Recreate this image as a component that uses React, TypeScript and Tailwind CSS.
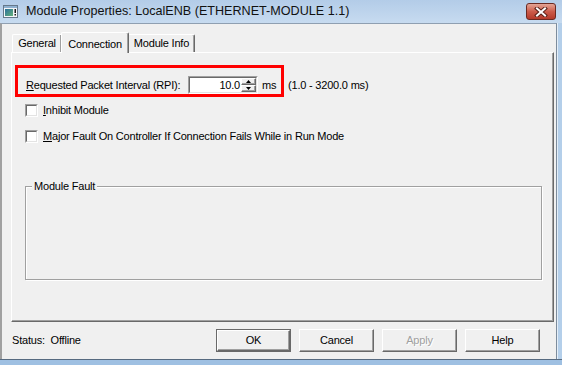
import React from "react"

const raised =
  "border border-t-white border-l-white border-r-[#696969] border-b-[#696969] shadow-[inset_-1px_-1px_0_#a0a0a0]"

function WinIcon() {
  return (
    <svg width="16" height="14" viewBox="0 0 16 14" className="ml-[3px] mt-[1px] shrink-0">
      <defs>
        <linearGradient id="ig" x1="0" y1="0" x2="1" y2="1">
          <stop offset="0" stopColor="#2b6f9b" />
          <stop offset="1" stopColor="#63b27a" />
        </linearGradient>
      </defs>
      <rect x="0.5" y="0.5" width="14" height="12" fill="#f4f6f8" stroke="#66788a" />
      <rect x="1" y="1" width="13" height="2" fill="#8fb0cf" />
      <rect x="2" y="4" width="8" height="7" fill="url(#ig)" />
      <rect x="11.5" y="4" width="1.5" height="4" fill="#1b1b1b" />
      <rect x="11.5" y="9" width="1.5" height="1.5" fill="#1b1b1b" />
    </svg>
  )
}

function CloseBtn() {
  return (
    <div className="ml-auto mr-[6px] self-start mt-[3px] w-[30px] h-[17px] rounded-[3px] border border-[#6b2a22] bg-linear-to-b from-[#e3a496] via-[#cc5c4b] to-[#b53a2a] flex items-center justify-center">
      <svg width="14" height="10" viewBox="0 0 14 10">
        <path d="M3 1.5 L11 8.5 M11 1.5 L3 8.5" stroke="#5a2018" strokeWidth="4" strokeLinecap="square" />
        <path d="M3 1.5 L11 8.5 M11 1.5 L3 8.5" stroke="#ffffff" strokeWidth="2" strokeLinecap="square" />
      </svg>
    </div>
  )
}

function Check({ children }: { children: React.ReactNode }) {
  return (
    <div className="flex items-center gap-[5px] ml-[13px]">
      <span className="w-[13px] h-[13px] shrink-0 border border-t-[#a0a0a0] border-l-[#a0a0a0] border-r-white border-b-white">
        <span className="block w-full h-full border border-t-[#696969] border-l-[#696969] border-r-[#e3e3e3] border-b-[#e3e3e3] bg-white" />
      </span>
      <span className="leading-[13px]">{children}</span>
    </div>
  )
}

function Arrow({ up }: { up?: boolean }) {
  return (
    <div className={"flex-1 flex items-center justify-center bg-[#f0f0f0] " + raised}>
      <svg width="5" height="3" viewBox="0 0 5 3">
        {up ? <path d="M0 3 L2.5 0 L5 3 Z" fill="#000" /> : <path d="M0 0 L5 0 L2.5 3 Z" fill="#000" />}
      </svg>
    </div>
  )
}

function Spin() {
  return (
    <div className="w-[70px] h-[18px] flex shrink-0 border border-t-[#a0a0a0] border-l-[#a0a0a0] border-r-white border-b-white">
      <div className="flex-1 flex border border-t-[#696969] border-l-[#696969] border-r-[#e3e3e3] border-b-[#e3e3e3] bg-white">
        <span className="flex-1 text-right pr-[1px] leading-[14px]">10.0</span>
        <div className="w-[15px] flex flex-col">
          <Arrow up />
          <Arrow />
        </div>
      </div>
    </div>
  )
}

function Btn({ label, def, off }: { label: string; def?: boolean; off?: boolean }) {
  const inner = (
    <div
      className={
        "w-full h-full flex items-center justify-center " +
        raised +
        (off ? " text-[#a0a0a0] [text-shadow:1px_1px_0_#fff]" : "")
      }
    >
      {label}
    </div>
  )
  return <div className={"w-[75px] h-[23px] " + (def ? "border border-[#696969]" : "")}>{inner}</div>
}

export default function App() {
  return (
    <div className="w-[562px] h-[365px] overflow-hidden flex flex-col bg-[#bcd4ec] font-['Liberation_Sans',Arial,sans-serif] text-[11px] tracking-[-0.2px] text-black">
      <div className="h-[23px] shrink-0 flex items-center bg-linear-to-b from-[#b3cce8] to-[#c7dbf0]">
        <WinIcon />
        <span className="ml-[7px] text-[12.6px] tracking-normal text-[#111]">
          Module Properties: LocalENB (ETHERNET-MODULE 1.1)
        </span>
        <CloseBtn />
      </div>

      <div className="flex-1 min-h-0 flex">
        <div className="w-[557px] flex flex-col bg-[#f0f0f0] border-t border-t-[#8f9fb1] border-l-2 border-l-[#a0a0a0] border-r border-r-[#7d8c9c] pl-[9px] pt-[8px]">
          <div className="flex items-end h-[20px] pl-[1px]">
            <div className="w-[49px] h-[18px] flex items-center justify-center border-t border-l border-white rounded-tl-[2px] shadow-[inset_-1px_0_0_#a0a0a0]">
              General
            </div>
            <div className="relative z-10 -mb-px w-[68px] h-[21px] flex items-start pt-[3px] justify-center bg-[#f0f0f0] border-t border-l border-white border-r border-r-[#696969] rounded-t-[2px] shadow-[inset_-1px_0_0_#a0a0a0]">
              Connection
            </div>
            <div className="w-[66px] h-[18px] flex items-center justify-center border-t border-white border-r border-r-[#696969] rounded-tr-[2px] shadow-[inset_-1px_0_0_#a0a0a0]">
              Module Info
            </div>
          </div>

          <div className={"w-[543px] h-[270px] flex flex-col " + raised}>
            <div className="flex items-end mt-[12px] ml-[3px]">
              <div className="w-[269px] h-[32px] border-[3px] border-[#ff0000] flex items-end pl-[8px]">
                <span className="w-[162px] h-[18px] flex items-center shrink-0">
                  <span>
                    <span className="underline underline-offset-[1px]">R</span>equested Packet Interval (RPI):
                  </span>
                </span>
                <Spin />
                <span className="ml-[4px] h-[18px] flex items-center">ms</span>
              </div>
              <span className="ml-[4px] mb-[3px] h-[18px] flex items-center">(1.0 - 3200.0 ms)</span>
            </div>

            <div className="mt-[7px]">
              <Check>
                <span className="underline underline-offset-[1px]">I</span>nhibit Module
              </Check>
            </div>
            <div className="mt-[13px]">
              <Check>
                <span className="underline underline-offset-[1px]">M</span>ajor Fault On Controller If Connection
                Fails While in Run Mode
              </Check>
            </div>

            <fieldset className="mt-[37px] ml-[13px] w-[517px] border border-[#a0a0a0] shadow-[inset_1px_1px_0_#fff,1px_1px_0_#fff]">
              <legend className="ml-[6px] px-[2px] leading-[13px] bg-[#f0f0f0]">Module Fault</legend>
              <div className="h-[86px]" />
            </fieldset>
          </div>

          <div className="w-[543px] mt-[7px] flex items-center">
            <span className="ml-[1px] whitespace-pre">Status:  Offline</span>
            <div className="ml-auto mr-[14px] flex gap-[8px]">
              <Btn label="OK" def />
              <Btn label="Cancel" />
              <Btn label="Apply" off />
              <Btn label="Help" />
            </div>
          </div>
        </div>
        <div className="flex-1 border-l border-l-[#e4eef8] bg-[#b4cfea]" />
      </div>

      <div className="h-[6px] shrink-0 border-t border-t-[#566a80] bg-[#9fc0e2]" />
    </div>
  )
}
